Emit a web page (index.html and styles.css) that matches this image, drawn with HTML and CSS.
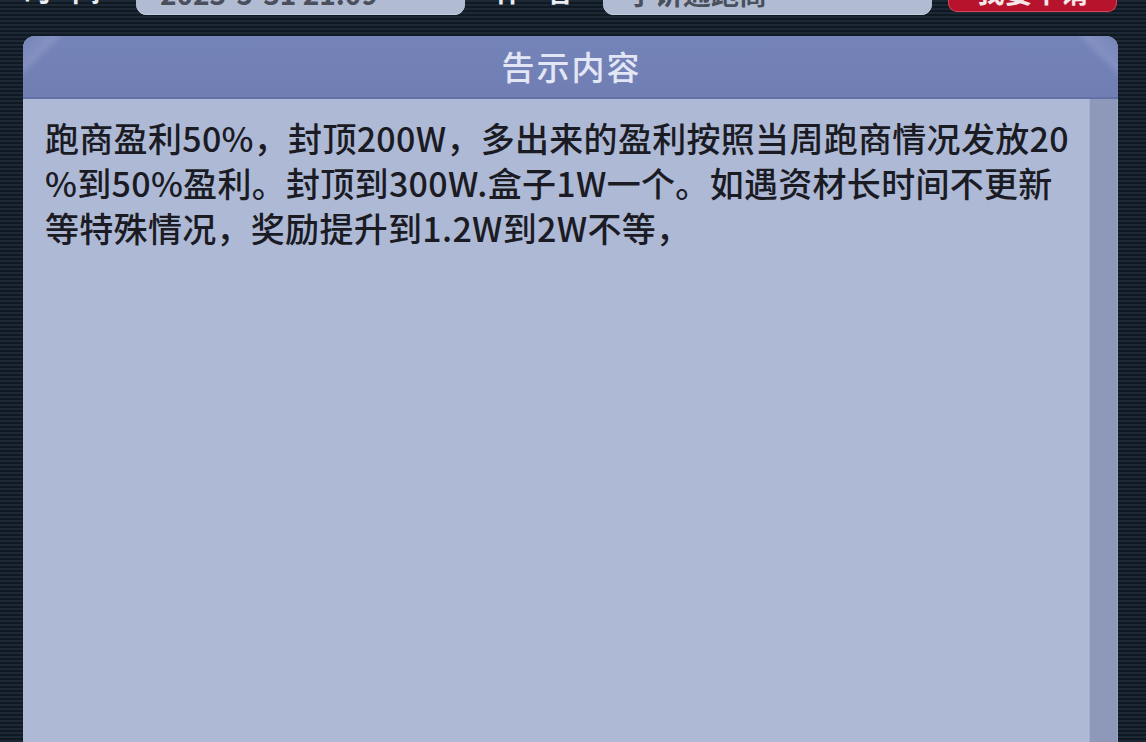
FILE: index.html
```html
<!DOCTYPE html>
<html lang="zh-CN">
<head>
<meta charset="utf-8">
<title>告示内容</title>
<link rel="stylesheet" href="styles.css">
</head>
<body>
<div class="topbar">
  <div class="label label-time"><span>时间</span></div>
  <div class="pill pill-date"><span>2023-5-31 21:09</span></div>
  <div class="label label-author"><span>作者</span></div>
  <div class="pill pill-name"><span>字讲通跑商</span></div>
  <div class="btn-red"><span>我要申请</span></div>
</div>
<div class="panel">
  <div class="panel-head">告示内容</div>
  <div class="panel-body">
    <div class="content">跑商盈利50%，封顶200W，多出来的盈利按照当周跑商情况发放20<br>%到50%盈利。封顶到300W.盒子1W一个。如遇资材长时间不更新<br>等特殊情况，奖励提升到1.2W到2W不等，</div>
    <div class="scrollbar"></div>
  </div>
</div>
</body>
</html>
```
FILE: styles.css
```css
html, body {
  margin: 0;
  padding: 0;
  height: 100%;
  overflow: hidden;
}
body {
  font-family: "Noto Sans CJK SC", "Noto Sans", sans-serif;
  background: repeating-linear-gradient(180deg, #1d2836 0px, #1d2836 2px, #101821 2px, #101821 4px);
}
.topbar {
  height: 36px;
  display: flex;
  align-items: flex-start;
  overflow: hidden;
}
.label {
  height: 8px;
  overflow: hidden;
  color: #e9ecf2;
  font-size: 28px;
  font-weight: 700;
}
.label span, .pill span, .btn-red span {
  display: block;
  line-height: 32px;
  margin-top: -26px;
  white-space: nowrap;
}
.label-time { margin-left: 24px; width: 88px; letter-spacing: 20px; }
.label-author { margin-left: 30px; width: 84px; letter-spacing: 22px; }
.pill {
  height: 15px;
  overflow: hidden;
  background: #b1bcd3;
  border-radius: 0 0 11px 11px;
  box-shadow: inset 0 -1px 0 #c4cde0;
  color: #4a4f5c;
  font-size: 28px;
  font-weight: 700;
}
.pill span { margin-top: -23px; padding-left: 24px; }
.pill-date { margin-left: 24px; width: 329px; }
.pill-name { margin-left: 24px; width: 329px; }
.btn-red {
  margin-left: 16px;
  width: 167px;
  height: 11px;
  overflow: hidden;
  background: #b8132c;
  border: 1px solid #d9485a;
  border-top: none;
  border-radius: 0 0 9px 9px;
  color: #f4e8ea;
  font-size: 28px;
  font-weight: 700;
  text-align: center;
}
.btn-red span { margin-top: -25px; }
.panel {
  margin-left: 23px;
  width: 1095px;
  height: 720px;
  border-radius: 12px 12px 0 0;
  overflow: hidden;
  display: flex;
  flex-direction: column;
  background: #adb9d6;
  box-shadow: inset 1px 0 0 #8d98bd;
}
.panel-head {
  position: relative;
  height: 63px;
  flex: none;
  background: linear-gradient(180deg, #7584b8 0%, #707eb3 100%);
  border-bottom: 2px solid #6370a6;
  color: #e2e6f5;
  font-size: 33px;
  font-weight: 500;
  line-height: 60px;
  text-align: center;
  letter-spacing: 2px;
  text-indent: 2px;
  box-sizing: border-box;
}
.panel-head::before,
.panel-head::after {
  content: "";
  position: absolute;
  top: 0;
  width: 40px;
  height: 40px;
}
.panel-head::before {
  left: 0;
  background: linear-gradient(135deg, rgba(255,255,255,0) 0%, rgba(150,160,205,0.45) 40%, rgba(110,124,178,0) 54%);
}
.panel-head::after {
  right: 0;
  background: linear-gradient(225deg, rgba(255,255,255,0) 0%, rgba(150,160,205,0.45) 40%, rgba(110,124,178,0) 54%);
}
.panel-body {
  flex: 1;
  display: flex;
}
.content {
  flex: 1;
  padding: 16px 0 0 22px;
  color: #1b1b24;
  font-size: 34px;
  font-weight: 500;
  line-height: 45px;
  letter-spacing: 0.3px;
  white-space: nowrap;
  background: #aeb9d6;
}
.scrollbar {
  width: 27px;
  flex: none;
  background: #8e99b9;
  border-left: 1px solid #a5afcb;
  border-right: 1px solid #9ba6c4;
}
```
